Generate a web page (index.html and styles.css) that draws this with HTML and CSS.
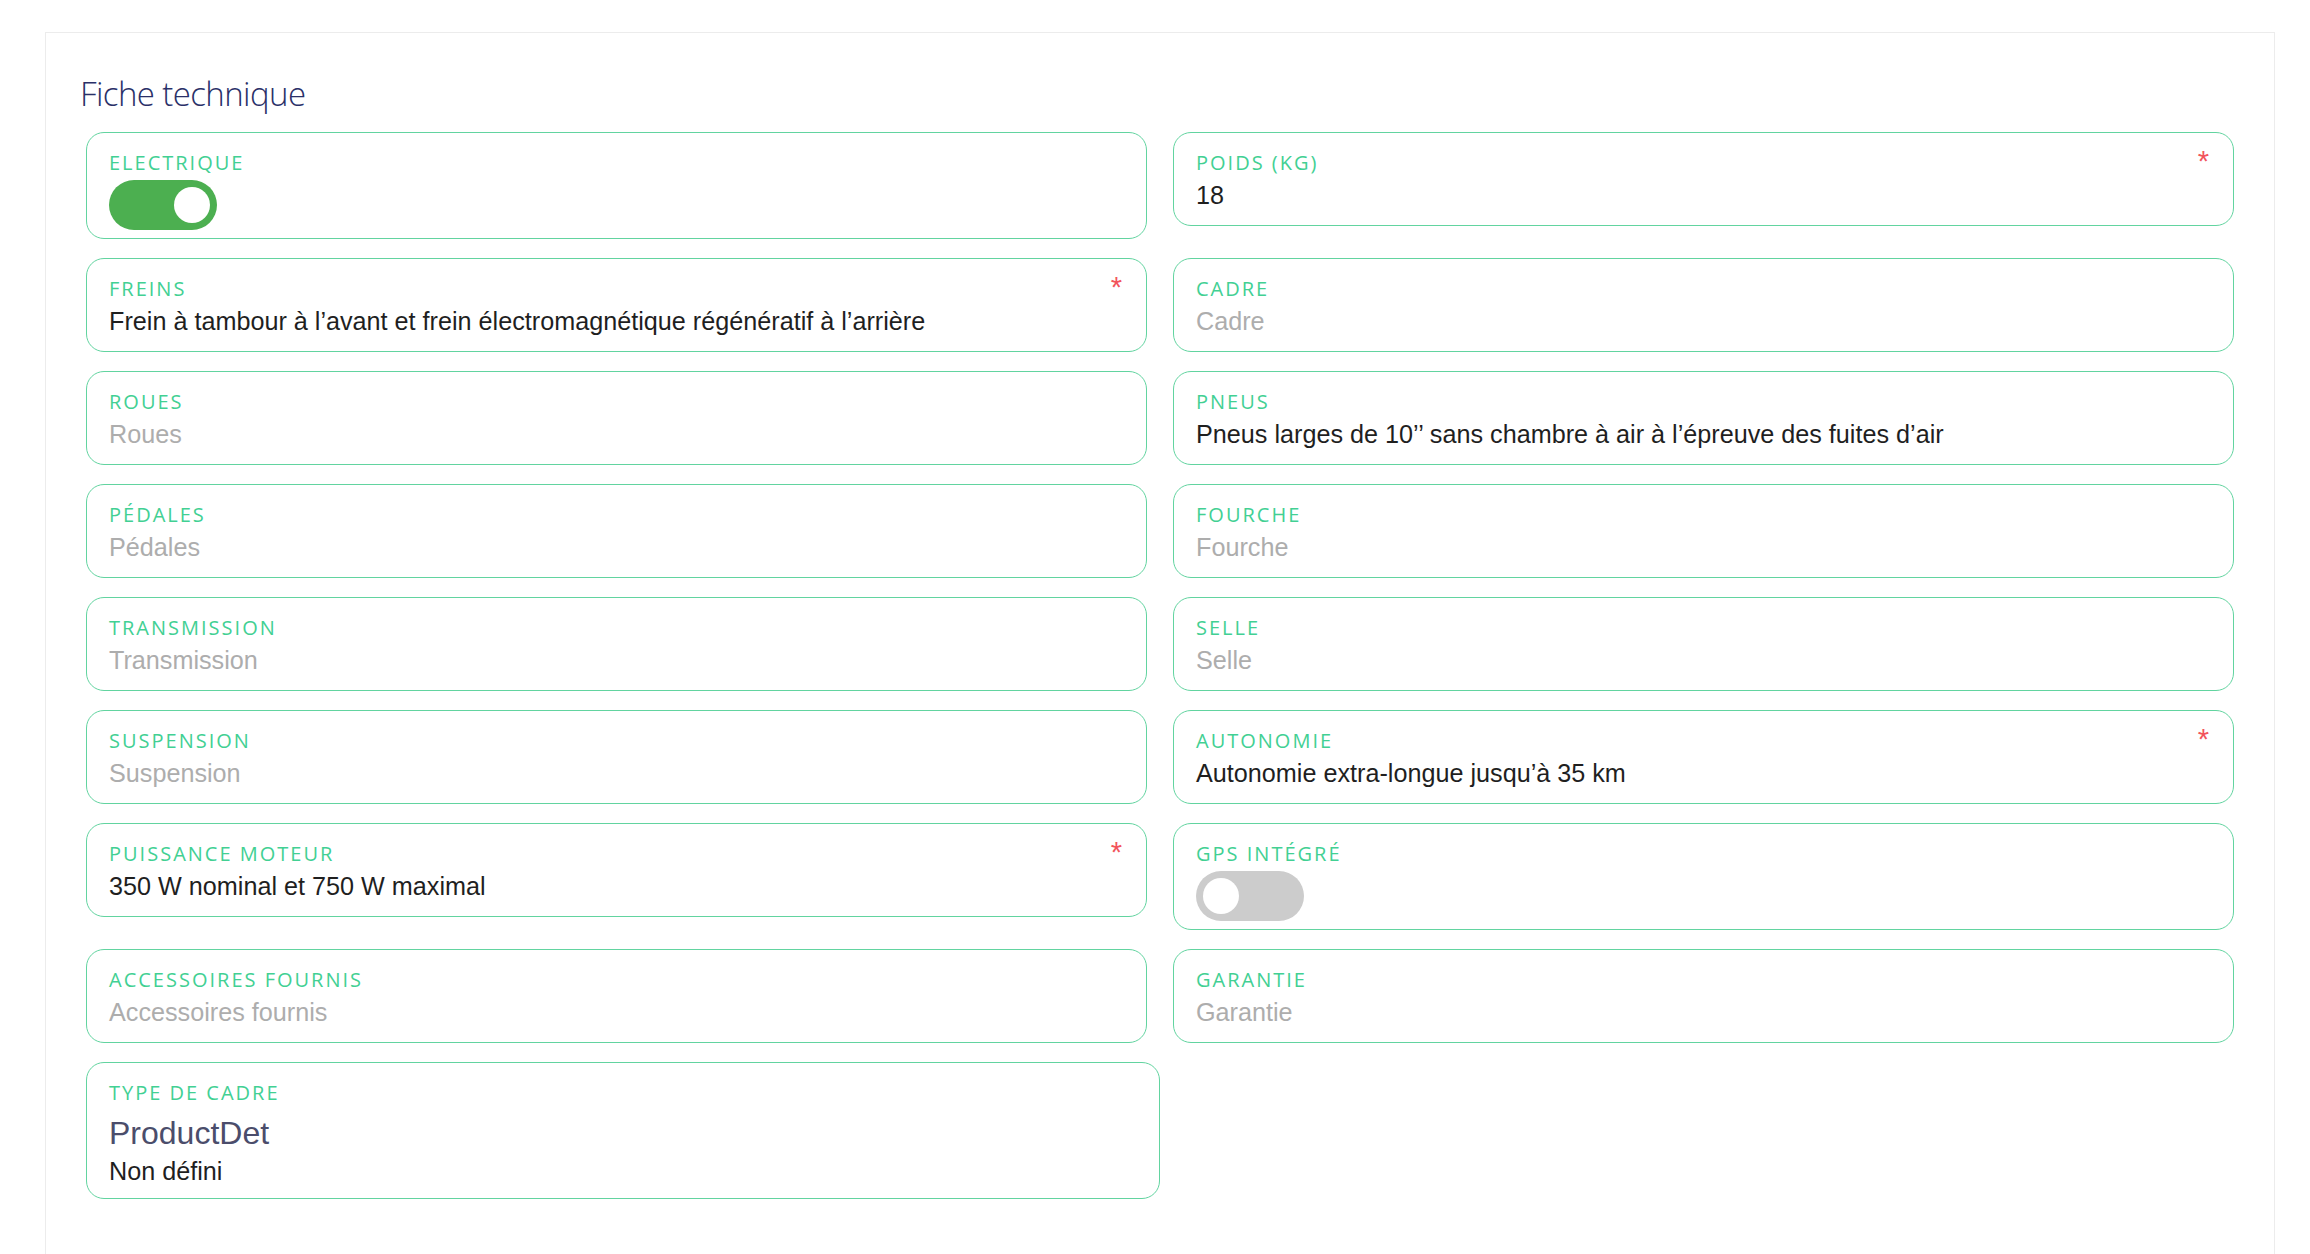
FILE: index.html
```html
<!DOCTYPE html>
<html lang="fr">
<head>
<meta charset="utf-8">
<title>Fiche technique</title>
<link rel="stylesheet" href="styles.css">
</head>
<body>
<section class="panel">
  <h2 class="title">Fiche technique</h2>
  <div class="grid">
    <div class="field">
      <div class="label">Electrique</div>
      <div class="toggle on"><span class="knob"></span></div>
    </div>
    <div class="field">
      <div class="label">Poids (kg)</div>
      <div class="value">18</div>
      <span class="req">*</span>
    </div>

    <div class="field">
      <div class="label">Freins</div>
      <div class="value">Frein à tambour à l’avant et frein électromagnétique régénératif à l’arrière</div>
      <span class="req">*</span>
    </div>
    <div class="field">
      <div class="label">Cadre</div>
      <div class="value empty">Cadre</div>
    </div>

    <div class="field">
      <div class="label">Roues</div>
      <div class="value empty">Roues</div>
    </div>
    <div class="field">
      <div class="label">Pneus</div>
      <div class="value">Pneus larges de 10’’ sans chambre à air à l’épreuve des fuites d’air</div>
    </div>

    <div class="field">
      <div class="label">Pédales</div>
      <div class="value empty">Pédales</div>
    </div>
    <div class="field">
      <div class="label">Fourche</div>
      <div class="value empty">Fourche</div>
    </div>

    <div class="field">
      <div class="label">Transmission</div>
      <div class="value empty">Transmission</div>
    </div>
    <div class="field">
      <div class="label">Selle</div>
      <div class="value empty">Selle</div>
    </div>

    <div class="field">
      <div class="label">Suspension</div>
      <div class="value empty">Suspension</div>
    </div>
    <div class="field">
      <div class="label">Autonomie</div>
      <div class="value">Autonomie extra-longue jusqu’à 35 km</div>
      <span class="req">*</span>
    </div>

    <div class="field">
      <div class="label">Puissance moteur</div>
      <div class="value">350 W nominal et 750 W maximal</div>
      <span class="req">*</span>
    </div>
    <div class="field">
      <div class="label">GPS intégré</div>
      <div class="toggle off"><span class="knob"></span></div>
    </div>

    <div class="field">
      <div class="label">Accessoires fournis</div>
      <div class="value empty">Accessoires fournis</div>
    </div>
    <div class="field">
      <div class="label">Garantie</div>
      <div class="value empty">Garantie</div>
    </div>

    <div class="field wide">
      <div class="label">Type de cadre</div>
      <div class="subtitle">ProductDet</div>
      <div class="value last">Non défini</div>
    </div>
  </div>
</section>
</body>
</html>
```

FILE: styles.css
```css
* { box-sizing: border-box; }

html, body {
  margin: 0;
  padding: 0;
  background: #ffffff;
}

body {
  font-family: "Liberation Sans", Arial, sans-serif;
  color: #212121;
}

.panel {
  margin: 32px 0 0 45px;
  width: 2230px;
  min-height: 1260px;
  border: 1px solid #ececec;
  border-bottom: none;
  padding: 41px 40px 0 40px;
}

.title {
  margin: 0 0 18px -6px;
  font-family: "Open Sans", "Noto Sans", sans-serif;
  font-weight: 300;
  font-size: 33px;
  line-height: 40px;
  color: #2a3068;
  letter-spacing: -0.6px;
}

.grid {
  display: grid;
  grid-template-columns: 1fr 1fr;
  column-gap: 26px;
  row-gap: 19px;
  align-items: start;
}

.field {
  position: relative;
  border: 1.5px solid #62d4a0;
  border-radius: 18px;
  padding: 16px 22px 8px 22px;
  background: #fff;
}

.field.wide {
  margin-right: -13px;
}

.label {
  font-family: "Open Sans", "Noto Sans", sans-serif;
  font-weight: 500;
  font-size: 20px;
  line-height: 27px;
  letter-spacing: 2px;
  text-transform: uppercase;
  color: #42d093;
}

.value {
  margin-bottom: 3px;
  font-size: 25.2px;
  line-height: 38px;
  color: #1f1f1f;
}

.value.last {
  margin-bottom: 0;
}

.value.empty {
  color: #adadad;
}

.subtitle {
  margin-top: 8px;
  font-size: 32px;
  line-height: 38px;
  color: #4b4d6b;
}

.req {
  position: absolute;
  top: 14px;
  right: 24px;
  font-size: 29px;
  line-height: 1;
  color: #f2545b;
}

.toggle {
  position: relative;
  margin-top: 4px;
  width: 108px;
  height: 50px;
  border-radius: 25px;
}

.toggle.on { background: #4caf50; }
.toggle.off { background: #cccccc; }

.knob {
  position: absolute;
  top: 7px;
  width: 36px;
  height: 36px;
  border-radius: 50%;
  background: #ffffff;
}

.toggle.on .knob { right: 7px; }
.toggle.off .knob { left: 7px; }
```
